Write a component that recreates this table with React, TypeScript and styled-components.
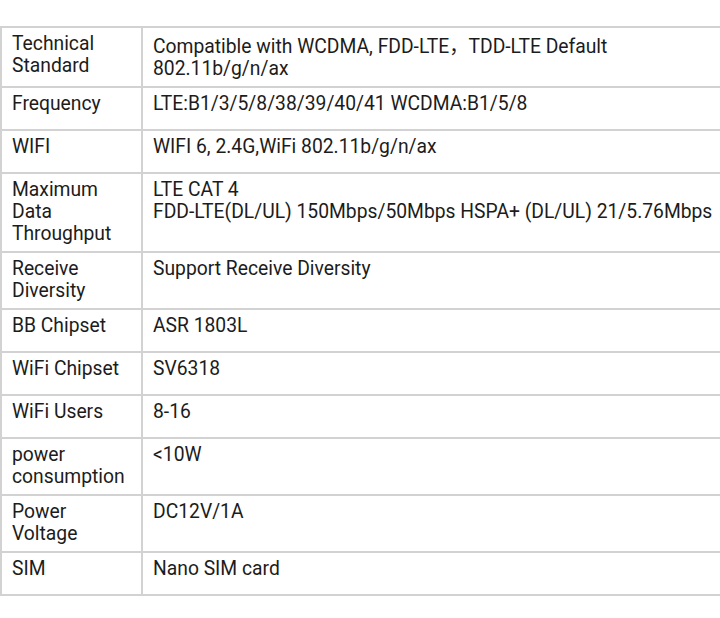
import React from "react";
import styled, { createGlobalStyle } from "styled-components";

const Global = createGlobalStyle`
  html, body {
    margin: 0;
    padding: 0;
    background: #ffffff;
    overflow: hidden;
  }
  body {
    font-family: Roboto, "Noto Sans CJK SC", sans-serif;
    color: #1c1c1c;
  }
`;

const Page = styled.div`
  width: 720px;
  height: 618px;
  overflow: hidden;
  padding: 26px 0 0 0;
  box-sizing: border-box;
`;

const Table = styled.table`
  border-collapse: collapse;
  width: 740px;
  table-layout: fixed;
  border-top: 1px solid #e6e6e6;
`;

const Row = styled.tr``;

const Cell = styled.td<{ $label?: boolean }>`
  width: ${(p) => (p.$label ? "119px" : "auto")};
  border: 2px solid #d2d2d2;
  padding: 5px 10px 6px 10px;
  vertical-align: top;
  font-size: 19.3px;
  line-height: 22px;
  color: #1c1c1c;
`;

const Content = styled.div`
  min-height: 30px;
`;

const WideComma = styled.span`
  font-family: "Noto Sans CJK SC", sans-serif;
  line-height: 25px;
`;

const rows: [string, React.ReactNode][] = [
  [
    "Technical Standard",
    <>
      Compatible with WCDMA, FDD-LTE<WideComma>，</WideComma>TDD-LTE Default
      <br />
      802.11b/g/n/ax
    </>,
  ],
  ["Frequency", "LTE:B1/3/5/8/38/39/40/41 WCDMA:B1/5/8"],
  ["WIFI", "WIFI 6, 2.4G,WiFi 802.11b/g/n/ax"],
  [
    "Maximum Data Throughput",
    <>
      LTE CAT 4
      <br />
      FDD-LTE(DL/UL) 150Mbps/50Mbps HSPA+ (DL/UL) 21/5.76Mbps
    </>,
  ],
  ["Receive Diversity", "Support Receive Diversity"],
  ["BB Chipset", "ASR 1803L"],
  ["WiFi Chipset", "SV6318"],
  ["WiFi Users", "8-16"],
  ["power consumption", "<10W"],
  ["Power Voltage", "DC12V/1A"],
  ["SIM", "Nano SIM card"],
];

export default function App() {
  return (
    <>
      <Global />
      <Page>
        <Table>
          <tbody>
            {rows.map(([label, value]) => (
              <Row key={label}>
                <Cell $label>
                  <Content>{label}</Content>
                </Cell>
                <Cell>
                  <Content>{value}</Content>
                </Cell>
              </Row>
            ))}
          </tbody>
        </Table>
      </Page>
    </>
  );
}
